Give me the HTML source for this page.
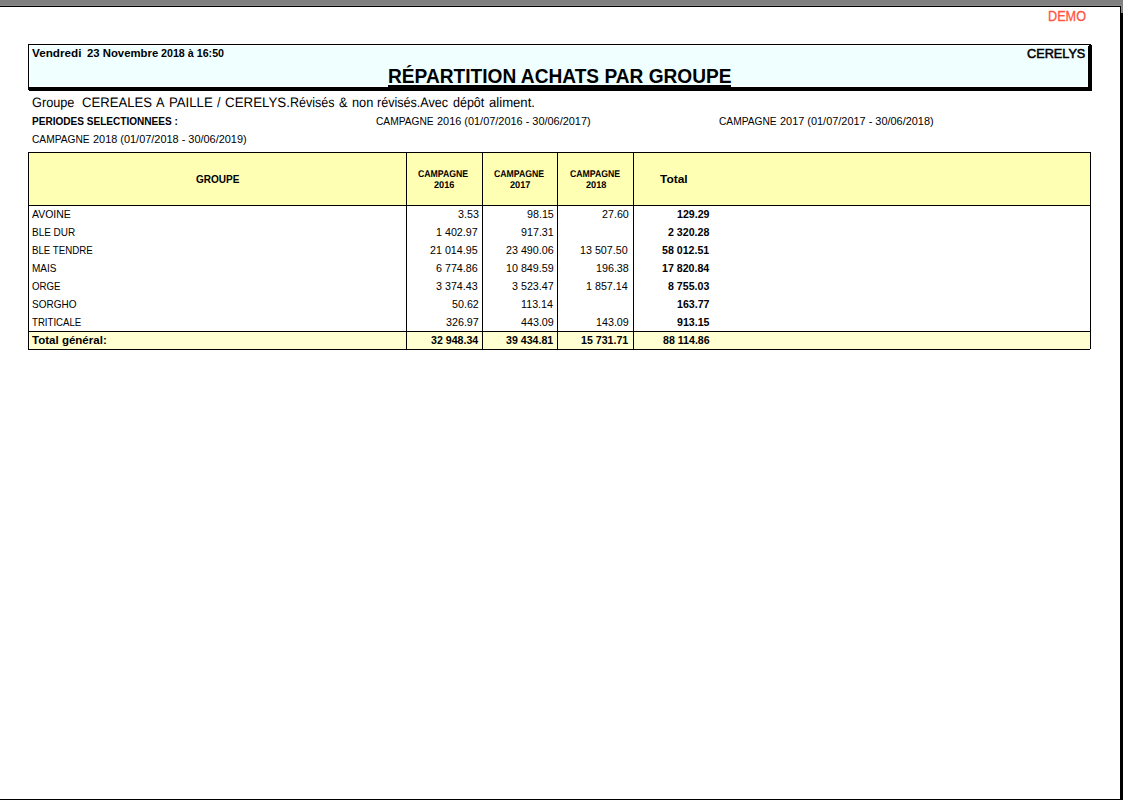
<!DOCTYPE html>
<html><head><meta charset="utf-8"><title>RÉPARTITION ACHATS PAR GROUPE</title>
<style>
html,body{margin:0;padding:0;}
body{width:1123px;height:800px;position:relative;overflow:hidden;background:#fff;font-family:"Liberation Sans",sans-serif;color:#000;}
.abs{position:absolute;}
.t{position:absolute;white-space:pre;line-height:1;transform-origin:0 0;}
.b{font-weight:bold;}
.line{position:absolute;background:#000;}
</style></head><body>
<!-- viewer chrome -->
<div class="abs" style="left:0;top:0;width:1123px;height:5px;background:#808080"></div>
<div class="abs" style="left:0;top:5px;width:1122px;height:1px;background:#8c8c8c"></div>
<div class="abs" style="left:0;top:6px;width:1121px;height:1px;background:#000"></div>
<div class="abs" style="left:1120px;top:6px;width:1px;height:794px;background:#000"></div>
<div class="abs" style="left:1121px;top:0;width:2px;height:13px;background:#808080"></div>
<div class="abs" style="left:1121px;top:13px;width:2px;height:787px;background:#000"></div>
<div class="abs" style="left:1121px;top:5px;width:1px;height:8px;background:#8c8c8c"></div>
<div class="abs" style="left:0;top:799px;width:1123px;height:1px;background:#000"></div>

<!-- header box -->
<div class="abs" style="left:30px;top:46px;width:1057px;height:40px;background:#f0ffff"></div>
<div class="line" style="left:28px;top:44px;width:1063px;height:1px"></div>
<div class="line" style="left:28px;top:44px;width:1px;height:46px"></div>
<div class="line" style="left:1088px;top:46px;width:4px;height:45px"></div>
<div class="line" style="left:1089px;top:45px;width:3px;height:1px"></div>
<div class="line" style="left:29px;top:87px;width:1063px;height:4px"></div>
<div class="line" style="left:388px;top:85px;width:343px;height:2px"></div>

<!-- table -->
<div class="abs" style="left:29px;top:153px;width:1061px;height:52px;background:#ffffb4;"></div>
<div class="abs" style="left:29px;top:332px;width:1061px;height:17px;background:#ffffd2;"></div>
<div class="line" style="left:28px;top:152px;width:1063px;height:1px"></div>
<div class="line" style="left:28px;top:205px;width:1063px;height:1px"></div>
<div class="line" style="left:28px;top:331px;width:1063px;height:1px"></div>
<div class="line" style="left:28px;top:349px;width:1062px;height:1px"></div>
<div class="line" style="left:28px;top:152px;width:1px;height:198px"></div>
<div class="line" style="left:406px;top:152px;width:1px;height:198px"></div>
<div class="line" style="left:482px;top:152px;width:1px;height:198px"></div>
<div class="line" style="left:557px;top:152px;width:1px;height:198px"></div>
<div class="line" style="left:633px;top:152px;width:1px;height:198px"></div>
<div class="line" style="left:1090px;top:152px;width:1px;height:197px"></div>

<div class="t" id="demo" style="left:1047.60px;top:9px;font-size:14px;transform:scaleX(0.9049);color:#ff5540;-webkit-text-stroke:0.3px #ff5540;">DEMO</div>
<div class="t b" id="date" style="left:32.00px;top:48px;font-size:11px;transform:scaleX(1.0652);">Vendredi</div>
<div class="t b" id="date2" style="left:86.60px;top:48px;font-size:11px;transform:scaleX(1.0304);">23 Novembre</div>
<div class="t b" id="date3" style="left:161.40px;top:48px;font-size:11px;transform:scaleX(0.9723);">2018 à 16:50</div>
<div class="t" id="cer" style="left:1027.10px;top:47px;font-size:13.33px;transform:scaleX(0.9525);-webkit-text-stroke:0.55px #000;">CERELYS</div>
<div class="t b" id="title" style="left:387.72px;top:67px;font-size:19.5px;transform:scaleX(0.9808);">RÉPARTITION ACHATS PAR GROUPE</div>
<div class="t" id="g0" style="left:31.57px;top:96px;font-size:13.7px;transform:scaleX(0.9295);text-rendering:geometricPrecision;">Groupe</div>
<div class="t" id="g1" style="left:81.54px;top:96px;font-size:13.7px;transform:scaleX(0.9569);text-rendering:geometricPrecision;">CEREALES</div>
<div class="t" id="g2" style="left:155.90px;top:96px;font-size:13.7px;transform:scaleX(0.9300);text-rendering:geometricPrecision;">A</div>
<div class="t" id="g3" style="left:168.84px;top:96px;font-size:13.7px;transform:scaleX(0.9636);text-rendering:geometricPrecision;">PAILLE</div>
<div class="t" id="g4" style="left:217.30px;top:96px;font-size:13.7px;transform:scaleX(0.9300);text-rendering:geometricPrecision;">/</div>
<div class="t" id="g5" style="left:225.23px;top:96px;font-size:13.7px;transform:scaleX(0.9738);text-rendering:geometricPrecision;">CERELYS.</div>
<div class="t" id="g6" style="left:290.29px;top:96px;font-size:13.7px;transform:scaleX(0.9149);text-rendering:geometricPrecision;">Révisés</div>
<div class="t" id="g7" style="left:338.90px;top:96px;font-size:13.7px;transform:scaleX(0.9300);text-rendering:geometricPrecision;">&amp;</div>
<div class="t" id="g8" style="left:352.37px;top:96px;font-size:13.7px;transform:scaleX(0.9333);text-rendering:geometricPrecision;">non</div>
<div class="t" id="g9" style="left:377.48px;top:96px;font-size:13.7px;transform:scaleX(0.9197);text-rendering:geometricPrecision;">révisés.Avec</div>
<div class="t" id="g10" style="left:453.39px;top:96px;font-size:13.7px;transform:scaleX(0.9121);text-rendering:geometricPrecision;">dépôt</div>
<div class="t" id="g11" style="left:489.24px;top:96px;font-size:13.7px;transform:scaleX(0.9587);text-rendering:geometricPrecision;">aliment.</div>
<div class="t b" id="per" style="left:32.10px;top:116px;font-size:11px;transform:scaleX(0.9145);">PERIODES SELECTIONNEES :</div>
<div class="t" id="c16" style="left:375.90px;top:116px;font-size:11px;transform:scaleX(0.9274);">CAMPAGNE</div>
<div class="t" id="c16b" style="left:437.00px;top:116px;font-size:11px;transform:scaleX(0.9929);">2016 (01/07/2016 - 30/06/2017)</div>
<div class="t" id="c17" style="left:718.70px;top:116px;font-size:11px;transform:scaleX(0.9274);">CAMPAGNE</div>
<div class="t" id="c17b" style="left:779.80px;top:116px;font-size:11px;transform:scaleX(0.9929);">2017 (01/07/2017 - 30/06/2018)</div>
<div class="t" id="c18" style="left:31.80px;top:134px;font-size:11px;transform:scaleX(0.9274);">CAMPAGNE</div>
<div class="t" id="c18b" style="left:92.90px;top:134px;font-size:11px;transform:scaleX(0.9929);">2018 (01/07/2018 - 30/06/2019)</div>
<div class="t b" id="hg" style="left:196.20px;top:174px;font-size:11px;transform:scaleX(0.9128);">GROUPE</div>
<div class="t b" id="ht" style="left:659.90px;top:174px;font-size:11px;transform:scaleX(1.0840);">Total</div>
<div class="t b" id="hc0" style="left:417.90px;top:170px;font-size:9.75px;transform:scaleX(0.8929);text-rendering:geometricPrecision;">CAMPAGNE</div>
<div class="t b" id="hy0" style="left:434.00px;top:181px;font-size:9.75px;transform:scaleX(0.9429);text-rendering:geometricPrecision;">2016</div>
<div class="t b" id="hc1" style="left:494.00px;top:170px;font-size:9.75px;transform:scaleX(0.8929);text-rendering:geometricPrecision;">CAMPAGNE</div>
<div class="t b" id="hy1" style="left:510.10px;top:181px;font-size:9.75px;transform:scaleX(0.9429);text-rendering:geometricPrecision;">2017</div>
<div class="t b" id="hc2" style="left:570.00px;top:170px;font-size:9.75px;transform:scaleX(0.8929);text-rendering:geometricPrecision;">CAMPAGNE</div>
<div class="t b" id="hy2" style="left:586.10px;top:181px;font-size:9.75px;transform:scaleX(0.9429);text-rendering:geometricPrecision;">2018</div>
<div class="t" id="l0" style="left:31.80px;top:209px;font-size:11px;transform:scaleX(0.9525);">AVOINE</div>
<div class="t" id="n0_0" style="left:457.52px;top:209px;font-size:11px;transform:scaleX(0.9750);">3.53</div>
<div class="t" id="n0_1" style="left:527.17px;top:209px;font-size:11px;transform:scaleX(0.9750);">98.15</div>
<div class="t" id="n0_2" style="left:601.67px;top:209px;font-size:11px;transform:scaleX(0.9750);">27.60</div>
<div class="t b" id="n0_3" style="left:677.15px;top:209px;font-size:11px;transform:scaleX(0.9650);">129.29</div>
<div class="t" id="l1" style="left:31.80px;top:227px;font-size:11px;transform:scaleX(0.9064);">BLE DUR</div>
<div class="t" id="n1_0" style="left:436.07px;top:227px;font-size:11px;transform:scaleX(0.9750);">1 402.97</div>
<div class="t" id="n1_1" style="left:521.33px;top:227px;font-size:11px;transform:scaleX(0.9750);">917.31</div>
<div class="t b" id="n1_3" style="left:667.50px;top:227px;font-size:11px;transform:scaleX(0.9650);">2 320.28</div>
<div class="t" id="l2" style="left:31.80px;top:245px;font-size:11px;transform:scaleX(0.8824);">BLE TENDRE</div>
<div class="t" id="n2_0" style="left:430.23px;top:245px;font-size:11px;transform:scaleX(0.9750);">21 014.95</div>
<div class="t" id="n2_1" style="left:505.73px;top:245px;font-size:11px;transform:scaleX(0.9750);">23 490.06</div>
<div class="t" id="n2_2" style="left:580.23px;top:245px;font-size:11px;transform:scaleX(0.9750);">13 507.50</div>
<div class="t b" id="n2_3" style="left:661.72px;top:245px;font-size:11px;transform:scaleX(0.9650);">58 012.51</div>
<div class="t" id="l3" style="left:31.80px;top:263px;font-size:11px;transform:scaleX(0.9111);">MAIS</div>
<div class="t" id="n3_0" style="left:436.07px;top:263px;font-size:11px;transform:scaleX(0.9750);">6 774.86</div>
<div class="t" id="n3_1" style="left:505.73px;top:263px;font-size:11px;transform:scaleX(0.9750);">10 849.59</div>
<div class="t" id="n3_2" style="left:595.83px;top:263px;font-size:11px;transform:scaleX(0.9750);">196.38</div>
<div class="t b" id="n3_3" style="left:661.72px;top:263px;font-size:11px;transform:scaleX(0.9650);">17 820.84</div>
<div class="t" id="l4" style="left:31.80px;top:281px;font-size:11px;transform:scaleX(0.8781);">ORGE</div>
<div class="t" id="n4_0" style="left:436.07px;top:281px;font-size:11px;transform:scaleX(0.9750);">3 374.43</div>
<div class="t" id="n4_1" style="left:511.57px;top:281px;font-size:11px;transform:scaleX(0.9750);">3 523.47</div>
<div class="t" id="n4_2" style="left:586.08px;top:281px;font-size:11px;transform:scaleX(0.9750);">1 857.14</div>
<div class="t b" id="n4_3" style="left:667.50px;top:281px;font-size:11px;transform:scaleX(0.9650);">8 755.03</div>
<div class="t" id="l5" style="left:31.80px;top:299px;font-size:11px;transform:scaleX(0.9083);">SORGHO</div>
<div class="t" id="n5_0" style="left:451.68px;top:299px;font-size:11px;transform:scaleX(0.9750);">50.62</div>
<div class="t" id="n5_1" style="left:521.33px;top:299px;font-size:11px;transform:scaleX(0.9750);">113.14</div>
<div class="t b" id="n5_3" style="left:677.15px;top:299px;font-size:11px;transform:scaleX(0.9650);">163.77</div>
<div class="t" id="l6" style="left:31.80px;top:317px;font-size:11px;transform:scaleX(0.8768);">TRITICALE</div>
<div class="t" id="n6_0" style="left:445.82px;top:317px;font-size:11px;transform:scaleX(0.9750);">326.97</div>
<div class="t" id="n6_1" style="left:521.33px;top:317px;font-size:11px;transform:scaleX(0.9750);">443.09</div>
<div class="t" id="n6_2" style="left:595.83px;top:317px;font-size:11px;transform:scaleX(0.9750);">143.09</div>
<div class="t b" id="n6_3" style="left:677.15px;top:317px;font-size:11px;transform:scaleX(0.9650);">913.15</div>
<div class="t b" id="l7" style="left:32.20px;top:335px;font-size:11px;transform:scaleX(1.0479);">Total général:</div>
<div class="t b" id="n7_0" style="left:430.72px;top:335px;font-size:11px;transform:scaleX(0.9650);">32 948.34</div>
<div class="t b" id="n7_1" style="left:506.22px;top:335px;font-size:11px;transform:scaleX(0.9650);">39 434.81</div>
<div class="t b" id="n7_2" style="left:580.72px;top:335px;font-size:11px;transform:scaleX(0.9650);">15 731.71</div>
<div class="t b" id="n7_3" style="left:662.68px;top:335px;font-size:11px;transform:scaleX(0.9650);">88 114.86</div>
</body></html>
